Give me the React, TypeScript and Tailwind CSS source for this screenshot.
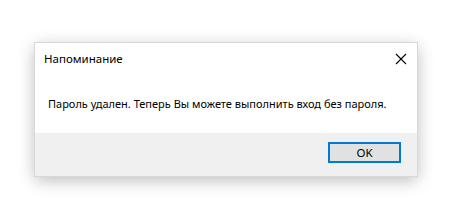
import React from "react";

export default function App() {
  return (
    <div className="w-[453px] h-[215px] bg-white pt-[43px] pl-[35px]" style={{ fontFamily: '"Noto Sans", "Open Sans", sans-serif' }}>
      <div className="w-[382px] h-[133px] flex flex-col bg-white shadow-[0_4px_16px_rgba(0,0,0,0.28)] outline outline-1 outline-[#d8d8d8]">
        <div className="h-[90px] flex flex-col">
          <div className="h-[32px] flex items-center justify-between pl-[9px] pr-[9px]">
            <span className="text-[11.5px] leading-none text-black">Напоминание</span>
            <svg width="12" height="12" viewBox="0 0 12 12" className="mr-[1px]">
              <path d="M1 1 L11 11 M11 1 L1 11" stroke="#000" strokeWidth="1.1" />
            </svg>
          </div>
          <div className="pl-[13px] pt-[23px] text-[11px] leading-none text-black whitespace-nowrap">
            Пароль удален. Теперь Вы можете выполнить вход без пароля.
          </div>
        </div>
        <div className="flex-1 bg-[#f0f0f0] flex justify-end items-start pt-[9px] pr-[16px]">
          <button className="w-[73px] h-[21px] bg-[#e1e1e1] border-2 border-[#0078d7] text-[11.5px] leading-none text-black flex items-center justify-center">
            OK
          </button>
        </div>
      </div>
    </div>
  );
}
